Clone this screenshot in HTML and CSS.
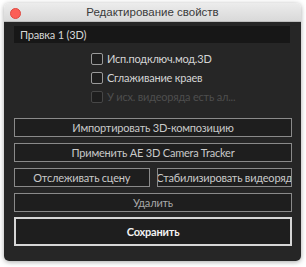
FILE: index.html
```html
<!DOCTYPE html>
<html>
    <head>
        <title>Редактирование свойств</title>
        <link rel="stylesheet" href="styles.css">
    </head>
    <body>
        <div class="window">
            <div class="window__titlebar">
                <span class="window__close"></span>
                <span class="window__title">Редактирование свойств</span>
            </div>
            <div class="window__body">
                <div class="field">Правка 1 (3D)</div>
                <div class="options">
                    <label class="option">
                        <span class="option__box"></span>
                        <span class="option__label">Исп.подключ.мод.3D</span>
                    </label>
                    <label class="option">
                        <span class="option__box"></span>
                        <span class="option__label">Сглаживание краев</span>
                    </label>
                    <label class="option option--disabled">
                        <span class="option__box"></span>
                        <span class="option__label">У исх. видеоряда есть ал...</span>
                    </label>
                </div>
                <div class="actions">
                    <button class="button">Импортировать 3D-композицию</button>
                    <button class="button">Применить AE 3D Camera Tracker</button>
                    <div class="actions__row">
                        <button class="button">Отслеживать сцену</button>
                        <button class="button">Стабилизировать видеоряд</button>
                    </div>
                    <button class="button button--dim">Удалить</button>
                    <button class="button button--save">Сохранить</button>
                </div>
            </div>
        </div>
    </body>
</html>
```

FILE: styles.css
```css
* {
  box-sizing: border-box;
  margin: 0;
  padding: 0;
}

body {
  font-family: Lato, "Open Sans", sans-serif;
  font-size: 11px;
  letter-spacing: -0.2px;
  background-color: #fff;
  padding: 3px 5px 6px 4px;
}

.window {
  width: 297px;
  height: 258px;
  display: flex;
  flex-direction: column;
  border-radius: 5px;
  overflow: hidden;
  box-shadow: 0 1px 5px rgba(0, 0, 0, 0.35);
}

.window__titlebar {
  height: 20px;
  position: relative;
  display: flex;
  align-items: center;
  justify-content: center;
  background: linear-gradient(#ececec, #d9d9d9);
  border-bottom: 1px solid #bdbdbd;
}

.window__close {
  position: absolute;
  left: 6px;
  top: 5px;
  width: 11px;
  height: 11px;
  border-radius: 50%;
  background-color: #fc5f57;
  border: 1px solid #de4a42;
}

.window__title {
  font-family: "Liberation Sans", Arial, sans-serif;
  font-size: 11.5px;
  letter-spacing: 0;
  color: #3a3a3a;
}

.window__body {
  flex: 1;
  background-color: #262626;
  padding: 4px 9px 15px 10px;
  display: flex;
  flex-direction: column;
}

.field {
  height: 17px;
  margin-right: 2px;
  padding-left: 6px;
  background-color: #171717;
  color: #d6d6d6;
  line-height: 17px;
}

.options {
  margin-top: 6px;
  padding-left: 77px;
  display: flex;
  flex-direction: column;
}

.option {
  height: 19px;
  display: flex;
  align-items: center;
  gap: 4px;
  color: #d4d4d4;
}

.option__box {
  width: 12px;
  height: 12px;
  border: 1px solid #9a9a9a;
  border-radius: 2px;
  background-color: #1e1e1e;
}

.option--disabled {
  color: #4e4e4e;
}

.option--disabled .option__box {
  border-color: #474747;
}

.actions {
  margin-top: 12px;
  display: flex;
  flex-direction: column;
  gap: 6px;
}

.actions__row {
  display: flex;
  gap: 7px;
}

.actions__row .button {
  flex: 1;
}

.button {
  height: 19px;
  display: flex;
  align-items: center;
  justify-content: center;
  overflow: hidden;
  white-space: nowrap;
  background-color: #1e1e1e;
  border: 1px solid #8a8a8a;
  color: #c9c9c9;
  font-family: inherit;
  font-size: 11px;
  letter-spacing: inherit;
}

.button--dim {
  color: #a8a8a8;
}

.button--save {
  height: 29px;
  margin-top: -1px;
  border: 2px solid #d6d6d6;
  color: #f2f2f2;
  font-weight: 700;
}
```
